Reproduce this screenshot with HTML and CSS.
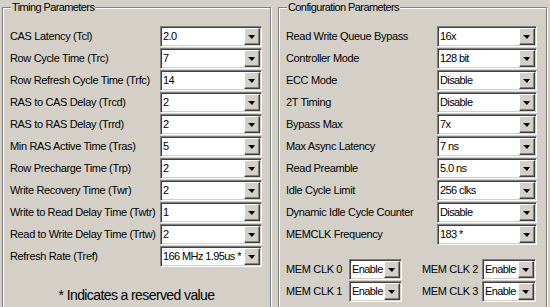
FILE: index.html
```html
<!DOCTYPE html>
<html lang="en">
  <head>
    <meta charset="UTF-8" />
    <meta name="viewport" content="width=device-width, initial-scale=1.0" />
    <title>Memory Settings</title>
    <link rel="stylesheet" href="styles.css">
  </head>
  <body>
    <div class="panels">
      <fieldset class="group timing">
        <legend>Timing Parameters</legend>
        <div class="row"><label>CAS Latency (Tcl)</label><div class="combo"><span class="value">2.0</span><span class="drop"></span></div></div>
        <div class="row"><label>Row Cycle Time (Trc)</label><div class="combo"><span class="value">7</span><span class="drop"></span></div></div>
        <div class="row"><label>Row Refresh Cycle Time (Trfc)</label><div class="combo"><span class="value">14</span><span class="drop"></span></div></div>
        <div class="row"><label>RAS to CAS Delay (Trcd)</label><div class="combo"><span class="value">2</span><span class="drop"></span></div></div>
        <div class="row"><label>RAS to RAS Delay (Trrd)</label><div class="combo"><span class="value">2</span><span class="drop"></span></div></div>
        <div class="row"><label>Min RAS Active Time (Tras)</label><div class="combo"><span class="value">5</span><span class="drop"></span></div></div>
        <div class="row"><label>Row Precharge Time (Trp)</label><div class="combo"><span class="value">2</span><span class="drop"></span></div></div>
        <div class="row"><label>Write Recovery Time (Twr)</label><div class="combo"><span class="value">2</span><span class="drop"></span></div></div>
        <div class="row"><label>Write to Read Delay Time (Twtr)</label><div class="combo"><span class="value">1</span><span class="drop"></span></div></div>
        <div class="row"><label>Read to Write Delay Time (Trtw)</label><div class="combo"><span class="value">2</span><span class="drop"></span></div></div>
        <div class="row"><label>Refresh Rate (Tref)</label><div class="combo"><span class="value">166 MHz 1.95us *</span><span class="drop"></span></div></div>
        <p class="note">* Indicates a reserved value</p>
      </fieldset>

      <fieldset class="group config">
        <legend>Configuration Parameters</legend>
        <div class="row"><label>Read Write Queue Bypass</label><div class="combo"><span class="value">16x</span><span class="drop"></span></div></div>
        <div class="row"><label>Controller Mode</label><div class="combo"><span class="value">128 bit</span><span class="drop"></span></div></div>
        <div class="row"><label>ECC Mode</label><div class="combo"><span class="value">Disable</span><span class="drop"></span></div></div>
        <div class="row"><label>2T Timing</label><div class="combo"><span class="value">Disable</span><span class="drop"></span></div></div>
        <div class="row"><label>Bypass Max</label><div class="combo"><span class="value">7x</span><span class="drop"></span></div></div>
        <div class="row"><label>Max Async Latency</label><div class="combo"><span class="value">7 ns</span><span class="drop"></span></div></div>
        <div class="row"><label>Read Preamble</label><div class="combo"><span class="value">5.0 ns</span><span class="drop"></span></div></div>
        <div class="row"><label>Idle Cycle Limit</label><div class="combo"><span class="value">256 clks</span><span class="drop"></span></div></div>
        <div class="row"><label>Dynamic Idle Cycle Counter</label><div class="combo"><span class="value">Disable</span><span class="drop"></span></div></div>
        <div class="row"><label>MEMCLK Frequency</label><div class="combo"><span class="value">183 *</span><span class="drop"></span></div></div>

        <div class="clocks">
          <label>MEM CLK 0</label><div class="combo small"><span class="value">Enable</span><span class="drop"></span></div>
          <label class="second">MEM CLK 2</label><div class="combo small"><span class="value">Enable</span><span class="drop"></span></div>
          <label>MEM CLK 1</label><div class="combo small"><span class="value">Enable</span><span class="drop"></span></div>
          <label class="second">MEM CLK 3</label><div class="combo small"><span class="value">Enable</span><span class="drop"></span></div>
        </div>
      </fieldset>
    </div>
  </body>
</html>
```

FILE: styles.css
```css
body {
  margin: 0;
  background-color: #d4d0c8;
  font-family: "Liberation Sans", Arial, sans-serif;
  font-size: 11px;
  letter-spacing: -0.35px;
  color: #000;
}
.panels {
  display: flex;
  gap: 7px;
  height: 307px;
  padding-left: 2px;
  overflow: hidden;
}
.group {
  box-sizing: border-box;
  flex: none;
  width: 269px;
  height: 330px;
  margin: 0;
  padding: 11px 7px 0 7px;
  border: 1px solid #808080;
  box-shadow: inset 1px 1px 0 #fff, 1px 1px 0 #fff;
}
.group legend {
  padding: 0 1px;
  margin-left: 1px;
  line-height: 14px;
  letter-spacing: -0.6px;
  background-color: #d4d0c8;
}
.row {
  display: flex;
  align-items: center;
  height: 22px;
}
.timing .row label {
  width: 150px;
}
.config .row label {
  width: 151px;
}
.combo {
  box-sizing: border-box;
  display: flex;
  width: 102px;
  height: 21px;
  padding: 1px;
  background-color: #fff;
  border: 1px solid;
  border-color: #808080 #fff #fff #808080;
  box-shadow: inset 1px 1px 0 #404040, inset -1px -1px 0 #d4d0c8;
}
.config .combo {
  width: 100px;
}
.combo .value {
  flex: 1;
  padding-left: 1px;
  line-height: 17px;
  letter-spacing: -0.6px;
  white-space: nowrap;
  overflow: hidden;
}
.combo .drop {
  box-sizing: border-box;
  position: relative;
  width: 16px;
  height: 17px;
  background-color: #d4d0c8;
  border: 1px solid;
  border-color: #fff #404040 #404040 #fff;
  box-shadow: inset -1px -1px 0 #808080;
}
.combo .drop::after {
  content: "";
  position: absolute;
  left: 3px;
  top: 6px;
  border-left: 4px solid transparent;
  border-right: 3px solid transparent;
  border-top: 4px solid #000;
}
.note {
  margin: 20px 0 0 0;
  text-align: center;
  font-size: 14px;
  letter-spacing: -0.6px;
}
.clocks {
  display: grid;
  grid-template-columns: 63px 53px 80px 54px;
  grid-auto-rows: 22px;
  align-items: center;
  margin-top: 13px;
}
.clocks .second {
  padding-left: 20px;
}
.config .combo.small {
  width: auto;
}
```
